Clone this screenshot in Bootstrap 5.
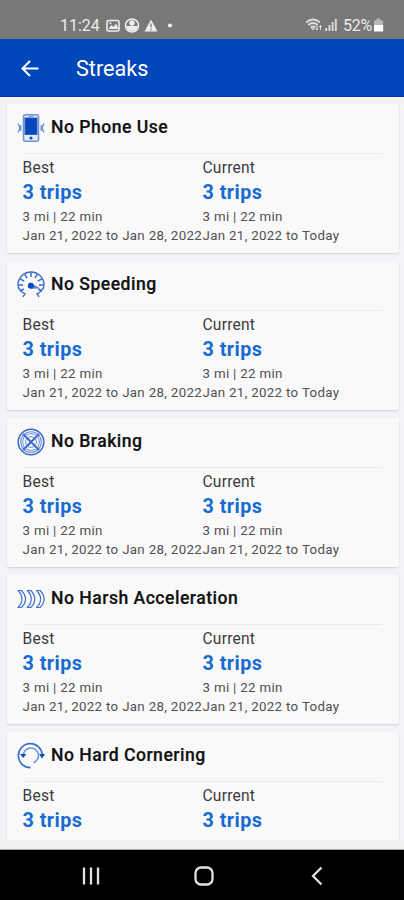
<!DOCTYPE html>
<html lang="en">
<head>
<meta charset="utf-8">
<meta name="viewport" content="width=device-width, initial-scale=1">
<title>Streaks</title>
<link href="https://cdn.jsdelivr.net/npm/bootstrap@5.3.0/dist/css/bootstrap.min.css" rel="stylesheet">
<style>
body{font-family:Roboto,"Liberation Sans",sans-serif;background:#f3f4f8;height:900px}
svg{display:block;flex:none}
.status{height:39px;background:#787878;color:#ededed;padding:13px 20px 0 60px;font-size:16px;line-height:26px}
.status .batt{font-size:16px;letter-spacing:-.2px}
.appbar{height:58px;background:#0047ba;border-bottom:1px solid #0b35a8;padding:2px 0 0 20px}
.appbar h1{font-size:21.6px;line-height:28px;font-weight:400;margin:1px 0 0 35px}
.feed{height:743px;padding:7px 5px 0 7px}
.streak{height:149px;background:#f9f9fa;border-radius:2px;margin-bottom:8px;box-shadow:0 1px 2px #cfd0d6;flex:none}
.streak-head{height:50px;margin:0 17px 0 16px;border-bottom:1px solid #ebebed;padding-bottom:3px}
.streak-head svg{margin:1px 6px 0 -6px}
.streak-head h2{font-size:17.6px;font-weight:500;line-height:24px;margin:0;color:#111;letter-spacing:.48px;-webkit-text-stroke:.2px #111}
.stats{padding:4px 0 0 15.500px}
.stats>div{width:180px;white-space:nowrap;color:#505050;font-size:13.3px;line-height:19px;letter-spacing:.33px}
.stats .label{font-size:15.6px;color:#3c3c3c;padding-top:1px;letter-spacing:.2px}
.stats .trips{font-size:19.8px;font-weight:700;line-height:29px;color:#176bd0;letter-spacing:.45px}
.feed-end{height:10px;background:#f0f0f3;border-bottom:1px solid #a5a5a8}
.navkeys{height:50px;background:#000}
</style>
<script src="https://cdn.jsdelivr.net/npm/bootstrap@5.3.0/dist/js/bootstrap.bundle.min.js"></script>
</head>
<body class="d-flex flex-column overflow-hidden">
<div class="status d-flex flex-shrink-0">
  <span>11:24</span>
  <svg width="70" height="26" viewBox="0 0 70 26" style="margin-left:5px">
    <rect x="2" y="7.5" width="12" height="10.5" rx="1.5" fill="none" stroke="#eee" stroke-width="1.6"/>
    <path d="M3.5 16l3-4 2 2 2.500-3.500 2.500 5.500z" fill="#eee"/><circle cx="5.500" cy="10.300" r="1" fill="#eee"/>
    <circle cx="27" cy="12.500" r="6.500" fill="none" stroke="#eee" stroke-width="1.500"/><circle cx="27" cy="10" r="2.700" fill="#eee"/><path d="M21 13h12q-1 5-6 5t-6-5z" fill="#eee"/>
    <path d="M46 6.500l6.500 12h-13z" fill="#eee"/><path d="M46 10.500v4M46 15.700v1.500" stroke="#787878" stroke-width="1.300"/>
    <circle cx="65" cy="12.500" r="2.100" fill="#eee"/>
  </svg>
  <svg class="ms-auto" width="34" height="26" viewBox="0 0 34 26">
    <path d="M1 9.500q7-6 14 0M3.300 12q4.700-4 9.400 0M5.700 14.500q2.300-2 4.600 0" fill="none" stroke="#ddd" stroke-width="1.700"/><path d="M8 17.500l-2-2.200h4z" fill="#ddd"/>
    <path d="M12 12.500v4.500m-1.500-1.500L12 17l1.500-1.500M15.500 17v-4.500m-1.500 1.500l1.500-1.500 1.500 1.500" fill="none" stroke="#ddd" stroke-width="1"/>
    <path d="M21.200 18v-3M24.400 18v-6M27.600 18V9M30.800 18V6" stroke="#ddd" stroke-width="1.900"/>
  </svg>
  <span class="batt ms-1">52%</span>
  <svg width="12" height="26" viewBox="0 0 12 26"><path d="M4.500 5.500h4v2h2.700V12H2V7.500h2.500z" fill="#b5b5b5"/><path d="M2 12h9.200v6.500H2z" fill="#fff"/></svg>
</div>
<header class="appbar d-flex align-items-center text-white flex-shrink-0">
  <svg width="21" height="20" viewBox="0 0 21 20"><path d="M18.500 9.500H3M10 2L2.500 9.500 10 17" fill="none" stroke="#fff" stroke-width="2"/></svg>
  <h1>Streaks</h1>
</header>
<main class="feed d-flex flex-column overflow-hidden">
  <section class="streak">
    <div class="streak-head d-flex align-items-center">
      <svg width="28" height="28" viewBox="0 0 28 28" fill="none" stroke="#6f91d8">
        <rect x="6.500" y=".8" width="15" height="26.400" rx="2" fill="#e4ecfb" stroke-width="1.500"/><rect x="8" y="4" width="12" height="16.500" fill="#0647bd" stroke="#2f61c5"/><path d="M11.500 2.300h5"/><circle cx="14" cy="24" r="1.600" fill="#174fbd" stroke="none"/>
        <path d="M1 9.500l2 4.500-2 4.500M3.800 11v6M27 9.500L25 14l2 4.500M24.200 11v6" stroke-width="1.400"/>
      </svg><h2>No Phone Use</h2>
    </div>
    <div class="stats d-flex">
      <div><div class="label">Best</div><div class="trips">3 trips</div><div>3 mi | 22 min</div><div>Jan 21, 2022 to Jan 28, 2022</div></div>
      <div><div class="label">Current</div><div class="trips">3 trips</div><div>3 mi | 22 min</div><div>Jan 21, 2022 to Today</div></div>
    </div>
  </section>
  <section class="streak">
    <div class="streak-head d-flex align-items-center">
      <svg width="28" height="28" viewBox="0 0 28 28" fill="none" stroke="#3a6acb">
        <path d="M6 26l2-3.200Q1 19.500 1 13.800a13 12.800 0 0 1 26 0q0 5.700-7 9l2 3.200" stroke-width="1.400"/>
        <path d="M14 1.500V6M7.800 3.500l2.300 3.700M20.200 3.500l-2.300 3.700M3.300 8l3.900 2.200M24.700 8l-3.900 2.200M1.500 14H6M22 14h4.500M3.300 20l3.500-2M24.700 20l-3.500-2" stroke-width="1.500"/>
        <path d="M14 12l9.500 5.500-10 .2z" fill="#5c85d5" stroke="none"/><circle cx="13.800" cy="14.700" r="2.900" fill="#0647bd" stroke="none"/>
      </svg><h2>No Speeding</h2>
    </div>
    <div class="stats d-flex">
      <div><div class="label">Best</div><div class="trips">3 trips</div><div>3 mi | 22 min</div><div>Jan 21, 2022 to Jan 28, 2022</div></div>
      <div><div class="label">Current</div><div class="trips">3 trips</div><div>3 mi | 22 min</div><div>Jan 21, 2022 to Today</div></div>
    </div>
  </section>
  <section class="streak">
    <div class="streak-head d-flex align-items-center">
      <svg width="28" height="28" viewBox="0 0 28 28" fill="none" stroke="#3568ca">
        <circle cx="14" cy="14" r="12.800" stroke-width="1.500"/><circle cx="14" cy="14" r="10.300" stroke="#6d91da" stroke-width="1.100"/>
        <path d="M6 6l16 16M22 6L6 22" stroke-width="1.900"/>
        <path d="M8.500 7q5.500-3 11 0M10.500 9.500q3.500-2 7 0M8.500 21q5.500 3 11 0M10.500 18.500q3.500 2 7 0M7 8.500q-3 5.500 0 11M9.500 10.500q-2 3.500 0 7M21 8.500q3 5.500 0 11M18.500 10.500q2 3.500 0 7" stroke="#6d91da"/>
      </svg><h2>No Braking</h2>
    </div>
    <div class="stats d-flex">
      <div><div class="label">Best</div><div class="trips">3 trips</div><div>3 mi | 22 min</div><div>Jan 21, 2022 to Jan 28, 2022</div></div>
      <div><div class="label">Current</div><div class="trips">3 trips</div><div>3 mi | 22 min</div><div>Jan 21, 2022 to Today</div></div>
    </div>
  </section>
  <section class="streak">
    <div class="streak-head d-flex align-items-center">
      <svg width="28" height="28" viewBox="0 0 28 28" fill="none" stroke="#416fcc" stroke-width="1.200" stroke-linejoin="round">
        <path id="chev" d="M1 5.500h3.500q4 4 4 8.500t-4 8.500H1q4-4 4-8.500t-4-8.500z"/>
        <use href="#chev" x="9.300"/><use href="#chev" x="18.600"/>
      </svg><h2>No Harsh Acceleration</h2>
    </div>
    <div class="stats d-flex">
      <div><div class="label">Best</div><div class="trips">3 trips</div><div>3 mi | 22 min</div><div>Jan 21, 2022 to Jan 28, 2022</div></div>
      <div><div class="label">Current</div><div class="trips">3 trips</div><div>3 mi | 22 min</div><div>Jan 21, 2022 to Today</div></div>
    </div>
  </section>
  <section class="streak">
    <div class="streak-head d-flex align-items-center">
      <svg width="28" height="28" viewBox="0 0 28 28" fill="none" stroke="#3e70cd" stroke-width="1.700">
        <path d="M13.500 25.700A12 12 0 1 1 25.300 13"/><path d="M6.300 13.500A7.600 7.600 0 1 1 16.500 20.700" stroke="#6b92db" stroke-width="1.500"/>
        <path d="M22 12h6.200L25 16.500zM3 12h6.400L6.200 16z" fill="#0d4dbd" stroke="none"/>
      </svg><h2>No Hard Cornering</h2>
    </div>
    <div class="stats d-flex">
      <div><div class="label">Best</div><div class="trips">3 trips</div><div>3 mi | 22 min</div><div>Jan 21, 2022 to Jan 28, 2022</div></div>
      <div><div class="label">Current</div><div class="trips">3 trips</div><div>3 mi | 22 min</div><div>Jan 21, 2022 to Today</div></div>
    </div>
  </section>
</main>
<div class="feed-end flex-shrink-0"></div>
<nav class="navkeys flex-shrink-0">
  <svg width="404" height="50" viewBox="0 0 404 50" fill="none" stroke="#e2e2e2" stroke-width="2.300"><path d="M84 17.500v17M91 17.500v17M98 17.500v17"/><rect x="195.500" y="17.500" width="17" height="17" rx="5.500"/><path d="M321.500 17.500l-8.500 8.500 8.500 8.500"/></svg>
</nav>
</body>
</html>
